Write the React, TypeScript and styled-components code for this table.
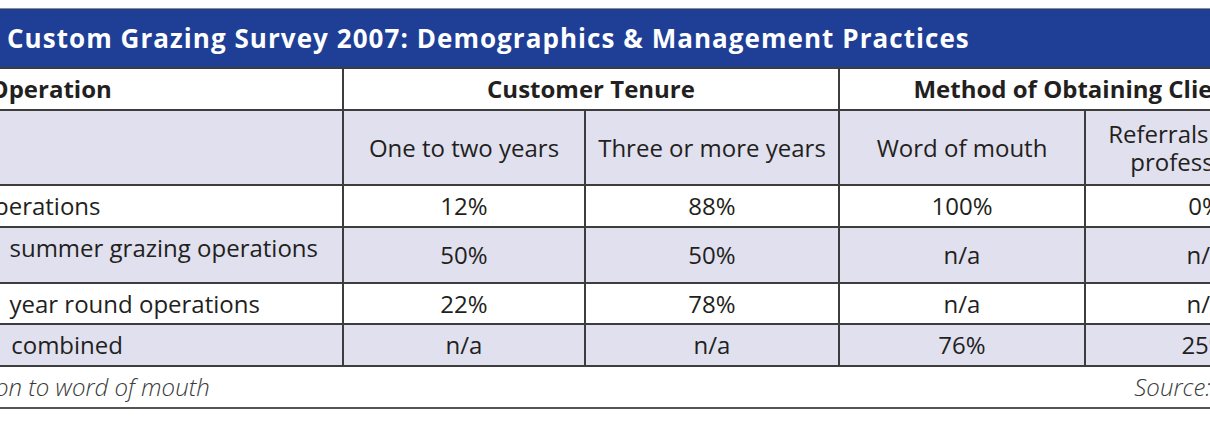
import styled, { createGlobalStyle } from 'styled-components'

const GlobalStyle = createGlobalStyle`
  html, body {
    margin: 0;
    padding: 0;
    background: #fff;
  }
  body {
    font-family: 'Open Sans', 'Noto Sans', sans-serif;
    color: #231f20;
  }
`

const Page = styled.div`
  width: 1210px;
  height: 423px;
  overflow: hidden;
  padding-top: 8px;
  box-sizing: border-box;
`

// the figure is wider than the window: it is cut on both sides
const Figure = styled.figure`
  margin: 0 0 0 -100px;
  width: 1424px;
`

const TitleBar = styled.h2`
  margin: 0;
  height: 59px;
  box-sizing: border-box;
  border-top: 1px solid #8c8c8c;
  background: #1f3f97;
  color: #fff;
  font-size: 26px;
  font-weight: 700;
  letter-spacing: 1.05px;
  display: flex;
  align-items: center;
  padding-left: 107px;
`

const Table = styled.table`
  width: 1424px;
  border-collapse: collapse;
  table-layout: fixed;
  font-size: 24px;
  line-height: 28px;
`

const Row = styled.tr<{ $shade?: boolean; $h: number }>`
  height: ${(p) => p.$h}px;
  background: ${(p) => (p.$shade ? '#e0e0ef' : '#fff')};
`

const GroupHead = styled.th<{ $left?: boolean }>`
  font-weight: 700;
  text-align: ${(p) => (p.$left ? 'left' : 'center')};
  padding: ${(p) => (p.$left ? '0' : '0 5px')};
  text-indent: ${(p) => (p.$left ? '-6px' : '0')};
  border: 2px solid #3d3d3d;
  white-space: nowrap;
`

const SubHead = styled.th`
  font-weight: 400;
  text-align: center;
  padding: 0 4px;
  border: 2px solid #3d3d3d;
`

const Label = styled.td`
  text-align: left;
  vertical-align: top;
  padding: 6px 8px 0 44px;
  border: 2px solid #3d3d3d;
  white-space: nowrap;
`

const Value = styled.td`
  text-align: center;
  vertical-align: middle;
  padding: 0;
  border: 2px solid #3d3d3d;
`

const NoteCell = styled.td`
  border-top: 2px solid #3d3d3d;
  border-bottom: 2px solid #555;
  vertical-align: top;
  padding: 6px 47px 0 9px;
`

const NoteLine = styled.div`
  display: flex;
  justify-content: space-between;
  font-style: italic;
  font-weight: 300;
  color: #3a3a3a;
  white-space: nowrap;
`

const rows = [
  { label: 'All operations', h: 42, values: ['12%', '88%', '100%', '0%'] },
  { label: 'Only\u2002summer grazing operations', h: 56, shade: true, values: ['50%', '50%', 'n/a', 'n/a'] },
  { label: 'Only\u2002year round operations', h: 41, values: ['22%', '78%', 'n/a', 'n/a'] },
  { label: 'Both\u2002combined', h: 42, shade: true, values: ['n/a', 'n/a', '76%', '25%'] },
]

export default function App() {
  return (
    <Page>
      <GlobalStyle />
      <Figure>
        <TitleBar>Custom Grazing Survey 2007: Demographics &amp; Management Practices</TitleBar>
        <Table>
          <colgroup>
            <col style={{ width: 442 }} />
            <col style={{ width: 242 }} />
            <col style={{ width: 254 }} />
            <col style={{ width: 246 }} />
            <col style={{ width: 240 }} />
          </colgroup>
          <thead>
            <Row $h={42}>
              <GroupHead $left>Type of Operation</GroupHead>
              <GroupHead colSpan={2}>Customer Tenure</GroupHead>
              <GroupHead colSpan={2}>Method of Obtaining Clients</GroupHead>
            </Row>
            <Row $h={75} $shade>
              <SubHead />
              <SubHead>One to two years</SubHead>
              <SubHead>Three or more years</SubHead>
              <SubHead>Word of mouth</SubHead>
              <SubHead>Referrals from ag professionals</SubHead>
            </Row>
          </thead>
          <tbody>
            {rows.map((r) => (
              <Row key={r.label} $h={r.h} $shade={r.shade}>
                <Label>{r.label}</Label>
                {r.values.map((v, i) => (
                  <Value key={i}>{v}</Value>
                ))}
              </Row>
            ))}
            <Row $h={42}>
              <NoteCell colSpan={5}>
                <NoteLine>
                  <span>In addition to word of mouth</span>
                  <span>Source: NDSU</span>
                </NoteLine>
              </NoteCell>
            </Row>
          </tbody>
        </Table>
      </Figure>
    </Page>
  )
}
